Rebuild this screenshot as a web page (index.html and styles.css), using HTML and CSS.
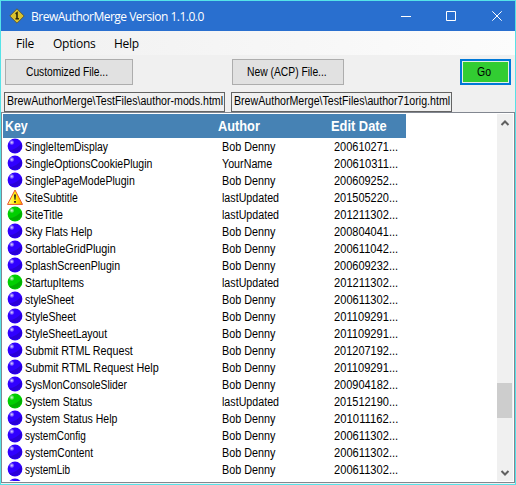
FILE: index.html
```html
<!DOCTYPE html>
<html lang="en">
<head>
<meta charset="utf-8">
<title>BrewAuthorMerge</title>
<link rel="stylesheet" href="styles.css">
</head>
<body>
<svg class="defs" width="0" height="0">
  <defs>
    <linearGradient id="warn" x1="0" x2="1"><stop offset="0" stop-color="#ffff9a"/><stop offset=".55" stop-color="#fff000"/><stop offset="1" stop-color="#ff9c00"/></linearGradient>
    <radialGradient id="shine"><stop offset="0" stop-color="#fff" stop-opacity=".85"/><stop offset="1" stop-color="#fff" stop-opacity="0"/></radialGradient>
    <symbol id="blue" viewBox="0 0 16 16"><circle cx="8" cy="8" r="7.4" fill="#3000ff"/><path d="M1.8 12Q9 12 14.6 5.2A7.4 7.4 0 0 1 1.8 12Z" fill="#2900d8"/><circle cx="4.8" cy="4.5" r="2.8" fill="url(#shine)"/></symbol>
    <symbol id="green" viewBox="0 0 16 16"><circle cx="8" cy="8" r="7.4" fill="#00cf00"/><path d="M1.8 12Q9 12 14.6 5.2A7.4 7.4 0 0 1 1.8 12Z" fill="#00ae00"/><circle cx="4.8" cy="4.5" r="2.8" fill="url(#shine)"/></symbol>
    <symbol id="alert" viewBox="0 0 16 16"><path d="M8 1L15.5 15.4H.5Z" fill="url(#warn)" stroke="#e8562a" stroke-linejoin="round"/><path d="M7 5.4h2l-.5 5.4h-1ZM7.1 12h1.8v1.8H7.1Z" fill="#222"/></symbol>
  </defs>
</svg>
<div class="window">
  <header class="titlebar">
    <svg class="app-icon" width="16" height="16" viewBox="0 0 16 16"><path d="M8 .8L15.2 8 8 15.2.8 8Z" fill="#d9c22e" stroke="#5a5a40" stroke-linejoin="round"/><path d="M6.6 5.8L8 4.8v5.4M6.5 10.8h3.4" fill="none" stroke="#2b2808" stroke-width="1.6"/></svg>
    <span class="title">BrewAuthorMerge Version 1.1.0.0</span>
    <svg class="controls" width="104" height="12" viewBox="0 0 104 12" fill="none" stroke="#fff"><path d="M0 6.5H10M45.5 1.5h9v9h-9Z"/><path d="M91.3 1.3l9.4 9.4M100.7 1.3l-9.4 9.4"/></svg>
  </header>
  <nav class="menu"><span>File</span><span>Options</span><span>Help</span></nav>
  <div class="toolbar">
    <button class="btn customized"><span class="fit" data-width="82">Customized File...</span></button>
    <button class="btn acp"><span class="fit" data-width="80">New (ACP) File...</span></button>
    <button class="btn go"><span class="fit" data-width="14">Go</span></button>
  </div>
  <div class="paths"><div class="path"><span class="fit" data-width="216">BrewAuthorMerge\TestFiles\author-mods.html</span></div><div class="path"><span class="fit" data-width="216">BrewAuthorMerge\TestFiles\author71orig.html</span></div></div>
  <main class="list">
    <div class="table">
      <div class="head"><span class="fit" data-width="23">Key</span><span class="fit" data-width="42">Author</span><span class="fit" data-width="56">Edit Date</span></div>
      <div id="rows"></div>
    </div>
    <div class="scrollbar">
      <svg width="16" height="18" viewBox="0 0 16 18"><path d="M4.5 11L8 7.5 11.5 11" fill="none" stroke="#606060" stroke-width="2"/></svg>
      <div class="thumb"></div>
      <svg width="16" height="16" viewBox="0 0 16 16"><path d="M4.5 6L8 9.5 11.5 6" fill="none" stroke="#606060" stroke-width="2"/></svg>
    </div>
  </main>
</div>
<script src="rows.js"></script>
</body>
</html>
```
FILE: styles.css
```css
* { box-sizing: border-box; }
body { margin: 0; font-family: "Liberation Sans", sans-serif; font-size: 12px; color: #000; overflow: hidden; }
.defs { position: absolute; }
.window { width: 516px; height: 485px; border: 1px solid #55e3e8; background: #f0f0f0; display: flex; flex-direction: column; }
.titlebar { height: 30px; flex: none; background: #296fcf; display: flex; align-items: center; padding: 0 16px 0 8px; color: #fff; }
.title { font: 12px "Open Sans", sans-serif; margin-left: 6px; letter-spacing: -.5px; white-space: nowrap; }
.controls { margin-left: auto; margin-right: -6px; }
.menu { height: 24px; flex: none; background: linear-gradient(90deg, #f0f0f0, #fcfcfc); display: grid; grid-template-columns: 37px 61px 60px; padding-left: 15px; align-items: center; font: 12px "Open Sans", sans-serif; letter-spacing: -.25px; }
.toolbar { display: flex; padding: 4px 4px 0; height: 37px; flex: none; }
.btn { height: 26px; padding: 0; border: 1px solid #adadad; background: #e1e1e1; font: 12px "Liberation Sans", sans-serif; color: #000; display: flex; align-items: center; justify-content: flex-start; }
.customized { width: 128px; padding-left: 20px; }
.acp { width: 112px; margin-left: 99px; padding-left: 14px; }
.go { width: 51px; margin-left: auto; padding-left: 15px; border: 2px solid #0078d7; background: #32cd32; box-shadow: inset 0 0 0 1px #e6f0e6; }
.fit { display: block; width: max-content; white-space: nowrap; transform-origin: 0 50%; }
.paths { display: flex; gap: 6px; padding-left: 3px; height: 20px; flex: none; }
.path { width: 221px; height: 20px; border: 1px solid #646464; padding-left: 2px; line-height: 17px; }
.path .fit { width: 216px; }
.list { flex: 1; min-height: 0; margin-bottom: 1px; border: 1px solid #828790; background: #fff; padding: 1px; display: flex; justify-content: space-between; overflow: hidden; }
.table { width: 404px; overflow: hidden; }
.head { height: 24px; width: 403px; background: #4682b4; color: #fff; font-weight: bold; font-size: 14px; line-height: 24px; display: grid; grid-template-columns: 213px 113px 1fr; padding-left: 2px; }
.row { height: 17px; display: grid; grid-template-columns: 18px 197px 112px 1fr; padding-left: 4px; line-height: 19px; }
.scrollbar { width: 16px; background: #f0f0f0; display: flex; flex-direction: column; }
.scrollbar svg { display: block; flex: none; }
.thumb { width: 15px; height: 35px; background: #cdcdcd; margin: 251px 0 auto; flex: none; }
```
FILE: rows.js
```js
// Status icon, key, key width in pixels, author, edit date
const rows = [
  ["blue", "SingleItemDisplay", 83, "Bob Denny", "200610271..."],
  ["blue", "SingleOptionsCookiePlugin", 127, "YourName", "200610311..."],
  ["blue", "SinglePageModePlugin", 110, "Bob Denny", "200609252..."],
  ["alert", "SiteSubtitle", 53, "lastUpdated", "201505220..."],
  ["green", "SiteTitle", 38, "lastUpdated", "201211302..."],
  ["blue", "Sky Flats Help", 67, "Bob Denny", "200804041..."],
  ["blue", "SortableGridPlugin", 91, "Bob Denny", "200611042..."],
  ["blue", "SplashScreenPlugin", 95, "Bob Denny", "200609232..."],
  ["green", "StartupItems", 59, "lastUpdated", "201211302..."],
  ["blue", "styleSheet", 49, "Bob Denny", "200611302..."],
  ["blue", "StyleSheet", 51, "Bob Denny", "201109291..."],
  ["blue", "StyleSheetLayout", 82, "Bob Denny", "201109291..."],
  ["blue", "Submit RTML Request", 108, "Bob Denny", "201207192..."],
  ["blue", "Submit RTML Request Help", 134, "Bob Denny", "201109291..."],
  ["blue", "SysMonConsoleSlider", 102, "Bob Denny", "200904182..."],
  ["green", "System Status", 67, "lastUpdated", "201512190..."],
  ["blue", "System Status Help", 92, "Bob Denny", "201011162..."],
  ["blue", "systemConfig", 61, "Bob Denny", "200611302..."],
  ["blue", "systemContent", 68, "Bob Denny", "200611302..."],
  ["blue", "systemLib", 45, "Bob Denny", "200611302..."],
  ["blue", "", 0, "", ""]
];
const authorWidths = { "Bob Denny": 53, "YourName": 50, "lastUpdated": 57 };
const cell = (text, width) => `<span class="fit" data-width="${width}">${text}</span>`;
document.getElementById("rows").innerHTML = rows.map(([icon, key, width, author, date]) =>
  `<div class="row"><svg width="16" height="16"><use href="#${icon}"/></svg>` +
  (key ? cell(key, width) + cell(author, authorWidths[author]) + cell(date, 64) : "") + `</div>`
).join("");

document.querySelectorAll(".fit").forEach(el => {
  el.style.transform = `scaleX(${el.dataset.width / el.scrollWidth})`;
});
```
